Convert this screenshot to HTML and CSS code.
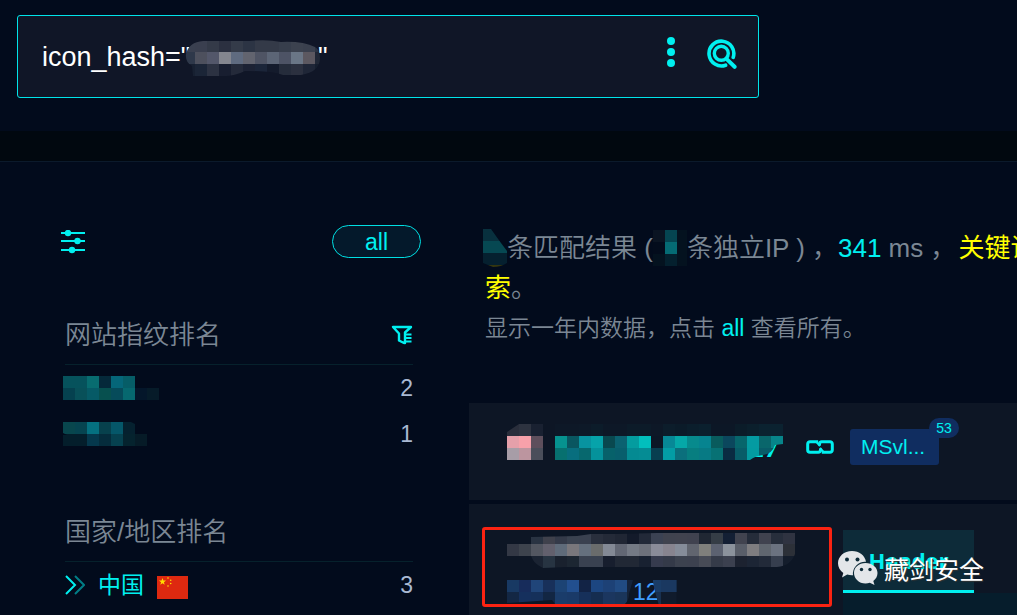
FILE: index.html
```html
<!DOCTYPE html>
<html lang="zh-CN">
<head>
<meta charset="utf-8">
<title>icon_hash</title>
<link rel="stylesheet" href="styles.css">
</head>
<body>
<header class="top">
  <form class="search">
    <input class="search-input" type="text" aria-label="查询语句" value='icon_hash="                 "'>
    <svg class="mosaic search-mask" viewBox="0 0 144 36" data-cells="3a4050 3a3f4f 343a48 2b3040 343b49 2c3444 343a48 343a48 373e4c 3c424f 3a404e 2c3342/2e384a 4d505d 53576a 84868f 5f6b80 62646f 4f5464 5c6576 4d5365 6a7686 5c5860 202736/172031 1b2537 2c3242 181e30 242a3a 1c2234 1b2539 141b2c 252c3b 2b303f 1f2637 151e2e"></svg>
    <button class="icon-btn more" type="button" aria-label="更多">
      <svg width="8" height="30" viewBox="0 0 8 30"><g fill="#00f0f0"><circle cx="4" cy="4" r="4"/><circle cx="4" cy="15" r="4"/><circle cx="4" cy="26" r="4"/></g></svg>
    </button>
    <button class="icon-btn" type="submit" aria-label="搜索">
      <svg width="30" height="30" viewBox="0 0 30 30" fill="none" stroke="#00f0f0" stroke-linecap="round"><path stroke-width="3.6" d="M18.600 26.200A12.400 12.400 0 1 1 26.200 18.400"/><circle cx="14.300" cy="14.300" r="7" stroke-width="3.400"/><path stroke-width="4" d="M20 20.400l7.600 7.400"/></svg>
    </button>
  </form>
</header>
<div class="band"></div>
<main class="main">
  <aside class="sidebar">
    <div class="tools">
      <button class="icon-btn" type="button" aria-label="筛选">
        <svg width="24" height="24" viewBox="0 0 24 24" stroke="#00f0f0" fill="#00f0f0"><path stroke-width="2" d="M0 3h24M0 11h24M0 20h24"/><g stroke="none"><circle cx="7" cy="3" r="3.200"/><circle cx="16.500" cy="11" r="3.200"/><circle cx="11" cy="20" r="3.200"/></g></svg>
      </button>
      <button class="pill" type="button">all</button>
    </div>
    <section class="rank">
      <h2 class="rank-title">网站指纹排名
        <svg width="22" height="20" viewBox="0 0 22 20" fill="none" stroke="#00f0f0" stroke-width="2.400"><path stroke-linejoin="round" d="M12.500 17.800L8 15.500V8.500L2 2h18l-6 5.500V18z"/><path stroke-width="2" d="M15 9.500H20.500M15 13H20.500M15 16.500H20.500"/></svg>
      </h2>
      <div class="row"><svg class="mosaic" width="96" height="24" viewBox="0 0 96 24" data-cells="06525c 06525c 086c70 05293a 056679 065d67 - -/05414f 085059 065a66 07504f 064b5a 06686f 04162a 061b29"></svg><span class="count">2</span></div>
      <div class="row"><svg class="mosaic mask-second" width="96" height="24" viewBox="0 0 96 24" data-cells="08464d 064450 057080 07414d 055769 05212f - -/041e2b 041e2b 05384c 052c3c 06414f 05232e 061b27 -"></svg><span class="count">1</span></div>
    </section>
    <section class="rank">
      <h2 class="rank-title">国家/地区排名</h2>
      <div class="row">
        <a class="country" href="#cn">
          <svg width="20" height="20" viewBox="0 0 20 20" fill="none" stroke="#00f0f0" stroke-width="2"><path d="M1 1l9 9-9 9"/><path opacity=".5" d="M10 1l9 9-9 9"/></svg>
          <span>中国</span>
          <svg class="flag" width="31" height="23" viewBox="0 0 31 23"><path fill="#de2910" d="M0 0h31v23H0z"/><g fill="#ffde00"><path d="M5.500 2l.9 2.600h2.700L6.900 6.200l.8 2.600-2.200-1.600-2.200 1.600.8-2.600L1.900 4.600h2.700z"/><circle cx="11" cy="2" r=".8"/><circle cx="13.700" cy="4.200" r=".8"/><circle cx="13.700" cy="7.500" r=".8"/><circle cx="11" cy="10" r=".8"/></g></svg>
        </a>
        <span class="count">3</span>
      </div>
    </section>
  </aside>
  <section class="results">
    <div class="summary">
      <p class="line"><svg class="mosaic mask-total" width="24" height="38" viewBox="0 0 24 38" data-cells="08303e 08303e/064852 064852/05202f 05202f/343610 343610"></svg><span>条匹配结果 (</span><svg class="mosaic mask-ip" width="34" height="36" viewBox="0 0 34 36" data-cells="0a1422 054551 04121f/030c1c 056b74 04121f/04121f 04202e 04121f"></svg><span>条独立IP ) ，</span><span class="hot">341</span><span class="unit">ms ，</span><span class="key">关键词搜</span></p>
      <p class="line"><span class="key">索</span><span>。</span></p>
      <p class="line note">显示一年内数据，点击 <a class="hot" href="#all">all</a> 查看所有。</p>
    </div>
    <article class="card site">
      <svg class="mosaic mask-favicon" width="36" height="36" viewBox="0 0 36 36" data-cells="292e3b 2d3340 192131/e5a0aa f7a1aa 5e4f5c/a79da7 bc959f 4a4e5a"></svg>
      <a class="host" href="#host"><span class="host-text">17</span>
        <svg class="mosaic mask-host" viewBox="0 0 228 36" data-cells="0d1827 0d1827 0d1928 0c1c2a 0d1827 0d1827 0c1b29 0c1b29 0d1827 0c1d2b 0b1b29 0b1e2c 0b202e 0c1726 0c1726 0b1c29 0b1f2c 0b2230 0b2230/06928f 095660 0893a0 06a3aa 09484f 0b6170 049c9f 02bfbd 0c1726 078896 05a8a8 078a8d 068490 095b5d 0b475d 07656b 049ba2 09666b 07858a/07706f 086e7e 07686e 05929b 07616a 085e6c 048a92 058c94 083e50 039da5 0b6f7c 077e80 077a84 077174 0a2b42 085c68 039ba1 085c68 075b64"></svg>
      </a>
      <svg class="chain" width="28" height="14" viewBox="0 0 28 14" fill="none" stroke="#00f0f0" stroke-width="3"><path d="M14.500 8.500V10a2.300 2.300 0 0 1-2.300 2.300H4A2.300 2.300 0 0 1 1.700 10V4A2.300 2.300 0 0 1 4 1.700h8.200"/><path d="M13.500 5.500V4a2.300 2.300 0 0 1 2.300-2.300H24A2.300 2.300 0 0 1 26.300 4v6a2.300 2.300 0 0 1-2.300 2.300h-8.200"/><path stroke-width="2" d="M10.500 2l3.500 4M14 8l3.500 4"/></svg>
      <button class="tag" type="button">MSvl...<span class="badge">53</span></button>
    </article>
    <article class="card detail">
      <div class="marked">
        <svg class="mosaic mask-title" width="288" height="36" viewBox="0 0 288 36" data-cells="- - 293342 3f414c 343a49 3a4250 3a4150 292f3d 242a38 202634 131a2a 222938 3b4253 40434f 41434f 40424f 202733 353d46 131f34 41434f 252c3a 40424f 272e3c 2f3341/333845 3d434d 535761 62606d 5f6b7a 79777c 65707e 6a6c6c 838995 626774 747a85 6d717b 8a8c99 87848f 858c99 61656f 80807c 5c6271 8b929c 595e69 7e7d80 60666f 6b7280 2c3038/- - 1b2433 273442 19212e 1c2632 394150 394150 171e2e 212835 212835 182131 363b4e 343a49 3c424f 3c414f 474b56 353b49 3b404f 1c2230 1c2535 222a39 363e4e 141d2c"></svg>
        <div class="ip">
          <svg class="mosaic mask-ip-left" width="126" height="24" viewBox="0 0 126 24" data-cells="183963 172c5b 204579 18305a 1c4374 224f8f 122345 1c4681 1d4176 214b83 15233b/132744 15305d 15305a 122643 1a3c6a 1a3a68 16305a 152d50 1b365f 1a355a 152338"></svg><span>12</span><svg class="mosaic mask-ip-right" width="24" height="24" viewBox="4 0 24 24" data-cells="1a3c66 1a3860 1a3860/18304f 101b2c 101b2c"></svg>
        </div>
      </div>
      <div class="pane">
        <button class="tab" type="button">Header</button>
        <div class="pane-body"></div>
      </div>
    </article>
  </section>
</main>
<div class="watermark">
  <svg width="40" height="34" viewBox="0 0 40 34"><g fill="#e3e6e9"><path d="M14 0C6 0 0 5.500 0 12.300c0 4 2 7.300 5.300 9.600L4 26.500l5.200-2.900c2 .6 3.500.8 5.800.7A12 12 0 0 1 28 10.800C27 4.500 21.200 0 14 0z"/><path d="M27.500 12C20.800 12 16 16.400 16 22s5 10.500 11.500 10.500c1.500 0 3-.3 4.300-.8L36.500 34l-1.200-4C38 28 39.500 25.300 39.500 22c0-5.600-5.300-10-12-10z"/></g><g fill="#0d2b39"><circle cx="9" cy="8.500" r="2"/><circle cx="19.500" cy="8.500" r="2"/><circle cx="23.500" cy="18.500" r="1.700"/><circle cx="32" cy="18.500" r="1.700"/></g></svg>
  <span>藏剑安全</span>
</div>
<script src="mosaic.js"></script>
</body>
</html>
```
FILE: styles.css
```css
* { box-sizing: border-box; }
body {
  position: relative;
  margin: 0;
  min-height: 100vh;
  overflow: hidden;
  background: #020b1c;
  color: #7b8794;
  font-family: "Liberation Sans", "Noto Sans CJK SC", sans-serif;
  font-size: 26px;
}
h2, p { margin: 0; font-weight: 350; }
a { text-decoration: none; color: #00f0f0; }
button { font-family: inherit; color: #00f0f0; cursor: pointer; }
svg { display: block; flex: none; }

.top { padding: 15px 17px 33px; }
.search {
  position: relative;
  display: flex;
  align-items: center;
  gap: 32px;
  width: 742px;
  max-width: 100%;
  height: 83px;
  padding: 0 21px 6px 24px;
  background: #101627;
  border: 1px solid #00e4ea;
  border-radius: 3px;
}
.search-input {
  flex: 1;
  min-width: 0;
  padding: 8px 0 0;
  border: 0;
  outline: 0;
  background: none;
  color: #fff;
  font: 27px "Liberation Sans", sans-serif;
}
.search-mask {
  position: absolute;
  left: 165px;
  top: 24px;
  width: 144px;
  height: 36px;
  clip-path: path("M3 14Q6 2 20 1L66 1Q84-1 98 2Q120 1 132 7Q137 10 137 18Q137 32 118 35L100 35Q90 31 62 31Q50 37 38 36L10 36L9 26Q2 22 3 14Z");
}
.icon-btn { padding: 0; border: 0; background: none; }
.more { padding-bottom: 4px; }
.band { height: 31px; background: #01080f; border-bottom: 1px solid #0b1a2b; }

.main { display: flex; padding-left: 61px; }
.sidebar { flex: none; width: 360px; padding-top: 63px; }
.tools { display: flex; align-items: center; justify-content: space-between; }
.pill {
  width: 89px;
  height: 33px;
  padding: 1px 0 0;
  border: 1px solid #00e0e4;
  border-radius: 17px;
  background: #04192b;
  font-size: 23px;
  line-height: 31px;
}
.rank { margin: 46px 8px 0 4px; }
.tools + .rank { margin-top: 48px; }
.rank-title {
  display: flex;
  align-items: center;
  justify-content: space-between;
  height: 59px;
  border-bottom: 1px solid #06212c;
  font-size: 26px;
  line-height: 40px;
}
.row { display: flex; align-items: center; justify-content: space-between; height: 46px; }
.row > .mosaic { margin-left: -2px; }
.mask-second { clip-path: path("M0 0H68L72 2V12H84V24H0V13H4L0 11Z"); }
.count { color: #a9b9d3; font-size: 23px; line-height: 40px; }
.country {
  display: flex;
  align-items: center;
  gap: 13px;
  font-size: 23px;
  line-height: 40px;
}
.flag { margin-top: 5px; }

.results { flex: 1; min-width: 0; margin-left: 48px; padding-top: 66px; overflow: hidden; }
.summary { padding-left: 16px; }
.line { display: flex; align-items: center; height: 40px; line-height: 40px; white-space: pre; }
.line > .mosaic:first-child { margin-left: -2px; }
.mask-total { clip-path: path("M0 0H8L18 14L24 22V34Q18 38 10 38L0 34Z"); }
.hot { color: #00f0f0; }
.unit { padding: 0 2px 0 7px; }
.key { color: #ff0; font-weight: 400; }
.note { font-size: 23px; }

.card { background: #0d1625; }
.site { display: flex; align-items: center; height: 97px; margin-top: 55px; padding: 0 0 19px 38px; }
.mask-favicon { clip-path: path("M0 8L12 0H36V36H0Z"); }
.host { position: relative; width: 228px; height: 36px; margin-left: 12px; }
.host-text {
  display: block;
  padding-right: 5px;
  text-align: right;
  font: bold 20px/52px "DejaVu Sans", sans-serif;
}
.mask-host {
  position: absolute;
  inset: 0;
  width: 228px;
  height: 36px;
  clip-path: path("M0 0H228V20L220 21Q217 30 208 31Q200 32 195 36H0Z");
}
.chain { margin: 10px 16px 0 23px; }
.tag {
  position: relative;
  width: 89px;
  height: 36px;
  margin-top: 10px;
  padding: 0 0 0 11px;
  border: 0;
  border-radius: 3px;
  background: #102d60;
  font-size: 21px;
  text-align: left;
}
.badge {
  position: absolute;
  top: -11px;
  right: -20px;
  width: 30px;
  border-radius: 10px;
  background: #102d60;
  font-size: 14px;
  line-height: 20px;
  text-align: center;
}
.detail { display: flex; align-items: flex-start; gap: 11px; margin-top: 4px; padding: 23px 0 0 13px; }
.marked {
  flex: none;
  width: 350px;
  padding: 2px 0 0 22px;
  border: 3px solid #fb2312;
  border-radius: 3px;
}
.mask-title { clip-path: path("M0 12H24V5L70 4L84 2H110L150 1H288V22Q284 34 270 35H60L36 36Q28 32 26 28L24 24H0Z"); }
.ip {
  display: flex;
  align-items: center;
  height: 24px;
  margin-top: 12px;
  color: #409eff;
  font-size: 23px;
  line-height: 20px;
}
.mask-ip-left { clip-path: path("M0 0H126L122 14Q122 20 118 24H48L45 20L0 23Z"); }
.mask-ip-right { margin-left: -6px; clip-path: path("M0 0H24V24H6Q2 12 0 0Z"); }
.pane { flex: 1; padding-top: 3px; }
.tab {
  display: block;
  width: 131px;
  height: 63px;
  padding: 0;
  border: 0;
  border-bottom: 3px solid #00f0f0;
  background: #0d2b39;
  font: bold 22px "Noto Sans", sans-serif;
}
.pane-body { height: 40px; background: #061d2c; }
.watermark {
  position: absolute;
  right: 33px;
  top: 551px;
  display: flex;
  gap: 6px;
  color: #fff;
  font-size: 25px;
  line-height: 38px;
  text-shadow: 1px 1px 1px #333;
}
```
FILE: mosaic.js
```js
// Fills each masked area with 12px tiles: rows split by "/", tiles by spaces, "-" is transparent.
document.querySelectorAll(".mosaic").forEach(function (svg) {
  svg.dataset.cells.split("/").forEach(function (row, y) {
    row.split(" ").forEach(function (color, x) {
      if (color === "-") return;
      var rect = document.createElementNS("http://www.w3.org/2000/svg", "rect");
      rect.setAttribute("x", x * 12);
      rect.setAttribute("y", y * 12);
      rect.setAttribute("width", 12);
      rect.setAttribute("height", 12);
      rect.setAttribute("fill", "#" + color);
      rect.setAttribute("shape-rendering", "crispEdges");
      svg.appendChild(rect);
    });
  });
});
```
